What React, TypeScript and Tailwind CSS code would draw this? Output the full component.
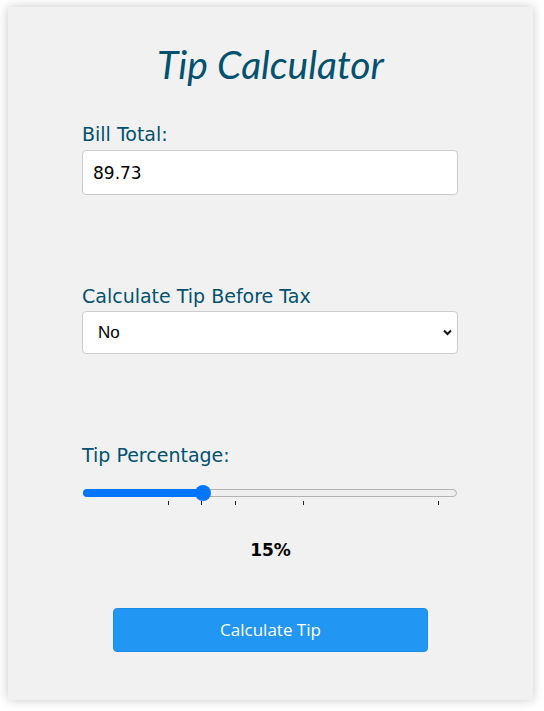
import React, { useState } from "react";

const ticks = [168, 201, 235, 303, 438];

export default function App() {
  const [bill, setBill] = useState("89.73");
  const [beforeTax, setBeforeTax] = useState("No");
  const pct = 15;

  return (
    <div className="min-h-[711px] bg-white pt-[7px] px-2">
      <div
        className="h-[693px] w-[525px] bg-[#f1f1f1] shadow-[0_0_10px_rgba(0,0,0,0.22)] pt-[31px]"
        style={{ fontFamily: '"DejaVu Sans", Verdana, sans-serif' }}
      >
        <h1
          className="text-center text-[39px] leading-[52px] italic text-[#01516f]"
          style={{ fontFamily: 'Lato, "Open Sans", sans-serif' }}
        >
          Tip Calculator
        </h1>

        <div className="px-[74px] mt-[32px]">
          <label className="block text-[19px] leading-[24px] text-[#01516f]">
            Bill Total:
          </label>
          <input
            type="text"
            value={bill}
            onChange={(e) => setBill(e.target.value)}
            className="mt-[4px] block w-[376px] h-[45px] bg-white border border-[#cccccc] rounded-[4px] px-[10px] text-[17px] text-black outline-none"
          />

          <label className="block mt-[89px] text-[19px] leading-[24px] text-[#01516f]">
            Calculate Tip Before Tax
          </label>
          <div className="relative mt-[3px] w-[376px] h-[43px]">
            <select
              value={beforeTax}
              onChange={(e) => setBeforeTax(e.target.value)}
              className="appearance-none w-full h-full bg-white border border-[#cccccc] rounded-[4px] pl-[15px] text-[17px] text-black outline-none"
              style={{ fontFamily: '"Liberation Sans", Arial, sans-serif' }}
            >
              <option>No</option>
              <option>Yes</option>
            </select>
            <svg
              className="absolute right-[6px] top-[18px] pointer-events-none"
              width="9"
              height="7"
              viewBox="0 0 9 7"
            >
              <path d="M1 1.5 L4.5 5 L8 1.5" stroke="#111" strokeWidth="2" fill="none" />
            </svg>
          </div>

          <label className="block mt-[89px] text-[19px] leading-[24px] text-[#01516f]">
            Tip Percentage:
          </label>

          <div className="relative mt-[17px] h-[22px] w-[376px]">
            <div className="absolute left-[1px] right-[1px] top-[5px] h-[8px] rounded-full border border-[#b3b3b3] bg-[#efefef]" />
            <div className="absolute left-[1px] top-[5px] h-[8px] w-[122px] rounded-full bg-[#0075ff]" />
            <div className="absolute left-[113px] top-[1px] h-[16px] w-[16px] rounded-full bg-[#0075ff]" />
            {ticks.map((x) => (
              <div
                key={x}
                className="absolute top-[17px] h-[4px] w-px bg-[#222]"
                style={{ left: x - 82 }}
              />
            ))}
          </div>

          <div className="mt-[34px] text-center text-[17px] leading-[20px] font-bold text-black">
            {pct}%
          </div>

          <div className="flex justify-center mt-[48px]">
            <button
              type="button"
              className="w-[315px] h-[44px] rounded-[4px] bg-[#2196f3] border border-[#1b8de8] text-white text-[17px]"
              style={{ fontFamily: '"Open Sans", "Noto Sans", sans-serif' }}
            >
              Calculate Tip
            </button>
          </div>
        </div>
      </div>
    </div>
  );
}
